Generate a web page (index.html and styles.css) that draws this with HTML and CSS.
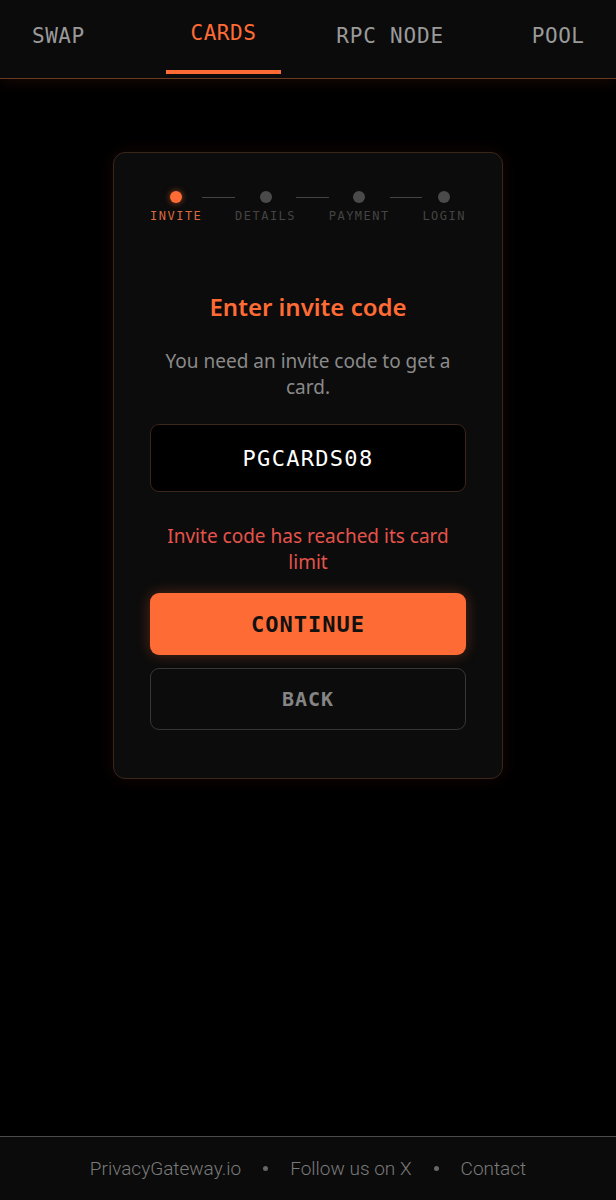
FILE: index.html
```html
<!DOCTYPE html>
<html lang="en">

<head>
    <meta charset="UTF-8">
    <meta name="viewport" content="width=device-width, initial-scale=1.0">
    <title>Privacy Gateway Cards</title>
    <link rel="stylesheet" href="styles.css">
</head>

<body>
    <header class="topnav">
        <a class="tab">SWAP</a>
        <a class="tab active">CARDS</a>
        <a class="tab">RPC NODE</a>
        <a class="tab">POOL</a>
    </header>

    <main class="page">
        <div class="card">
            <div class="stepper">
                <div class="step done">
                    <span class="dot"></span>
                    <span class="label">INVITE</span>
                </div>
                <span class="line"></span>
                <div class="step">
                    <span class="dot"></span>
                    <span class="label">DETAILS</span>
                </div>
                <span class="line"></span>
                <div class="step">
                    <span class="dot"></span>
                    <span class="label">PAYMENT</span>
                </div>
                <span class="line"></span>
                <div class="step">
                    <span class="dot"></span>
                    <span class="label">LOGIN</span>
                </div>
            </div>

            <h2 class="title">Enter invite code</h2>
            <p class="desc">You need an invite code to get a card.</p>

            <input class="code-input" type="text" value="PGCARDS08">

            <p class="error">Invite code has reached its card limit</p>

            <button class="btn btn-primary">CONTINUE</button>
            <button class="btn btn-secondary">BACK</button>
        </div>
    </main>

    <footer class="footer">
        <a>PrivacyGateway.io</a>
        <span class="sep"></span>
        <a>Follow us on X</a>
        <span class="sep"></span>
        <a>Contact</a>
    </footer>
</body>

</html>
```

FILE: styles.css
```css
* {
    box-sizing: border-box;
}

body {
    margin: 0;
    background: #000;
    color: #fff;
    font-family: 'Noto Sans', sans-serif;
    min-height: 100vh;
    display: flex;
    flex-direction: column;
}

.topnav {
    display: flex;
    align-items: stretch;
    height: 79px;
    padding-left: 7px;
    background: #0b0b0b;
    border-bottom: 1px solid #6a3a22;
    box-shadow: 0 4px 14px rgba(255, 107, 53, 0.08);
    overflow: hidden;
}

.tab {
    display: flex;
    justify-content: center;
    align-items: center;
    padding: 0 25px 6px;
    font-family: 'DejaVu Sans Mono', monospace;
    font-size: 21px;
    letter-spacing: 0.5px;
    color: #9a9a9a;
    position: relative;
    white-space: nowrap;
}

.tab:nth-child(2) {
    margin-left: 56px;
}

.tab:nth-child(3) {
    margin-left: 30px;
    letter-spacing: 0.8px;
}

.tab:nth-child(4) {
    margin-left: 38px;
}

.tab.active {
    color: #ff6b35;
    padding-bottom: 12px;
}

.tab.active::after {
    content: "";
    position: absolute;
    bottom: 4px;
    left: 0;
    right: 0;
    height: 4px;
    background: #ff6b35;
}

.page {
    flex: 1;
    display: flex;
    justify-content: center;
    align-items: flex-start;
    padding-top: 73px;
}

.card {
    width: 390px;
    background: #0c0c0c;
    border: 1px solid #3c2519;
    border-radius: 12px;
    padding: 38px 36px 48px;
    box-shadow: 0 0 18px rgba(255, 107, 53, 0.08);
    display: flex;
    flex-direction: column;
    align-items: stretch;
}

.stepper {
    display: flex;
    justify-content: center;
    align-items: flex-start;
}

.step {
    display: flex;
    flex-direction: column;
    align-items: center;
    gap: 6px;
}

.dot {
    width: 12px;
    height: 12px;
    border-radius: 50%;
    background: #4a4a4a;
}

.step.done .dot {
    background: #ff6b35;
    box-shadow: 0 0 6px rgba(255, 107, 53, 0.6);
}

.label {
    font-family: 'DejaVu Sans Mono', monospace;
    font-size: 12px;
    letter-spacing: 1.5px;
    color: #444;
}

.step.done .label {
    color: #d8693e;
}

.line {
    width: 33px;
    height: 1px;
    background: #444;
    margin-top: 6px;
}

.title {
    margin: 67px 0 0;
    text-align: center;
    font-size: 24px;
    font-weight: 600;
    color: #ff6b35;
}

.desc {
    margin: 25px 4px 0;
    text-align: center;
    font-size: 19px;
    line-height: 26px;
    color: #8a8a8a;
}

.code-input {
    margin-top: 24px;
    height: 68px;
    width: 100%;
    background: #000;
    border: 1px solid #3c2519;
    border-radius: 9px;
    text-align: center;
    font-family: 'DejaVu Sans Mono', monospace;
    font-size: 22px;
    letter-spacing: 1.3px;
    color: #fff;
    outline: none;
}

.error {
    margin: 31px 10px 0;
    text-align: center;
    font-size: 19px;
    line-height: 26px;
    color: #e5534b;
}

.btn {
    height: 62px;
    width: 100%;
    border-radius: 9px;
    font-family: 'DejaVu Sans Mono', monospace;
    font-weight: bold;
    letter-spacing: 1px;
    cursor: pointer;
}

.btn-primary {
    margin-top: 18px;
    background: #ff6b35;
    border: none;
    color: #111;
    font-size: 22px;
    box-shadow: 0 0 14px rgba(255, 107, 53, 0.3);
}

.btn-secondary {
    margin-top: 13px;
    background: #0c0c0c;
    border: 1px solid #363636;
    color: #858585;
    font-size: 20px;
}

.footer {
    height: 64px;
    background: #0b0b0b;
    border-top: 1px solid #4a4a4a;
    display: flex;
    justify-content: center;
    align-items: center;
    gap: 22px;
    font-family: 'Roboto', sans-serif;
    font-weight: 300;
    font-size: 19px;
    color: #7a7a7a;
}

.footer .sep {
    width: 5px;
    height: 5px;
    border-radius: 50%;
    background: #666;
}
```
